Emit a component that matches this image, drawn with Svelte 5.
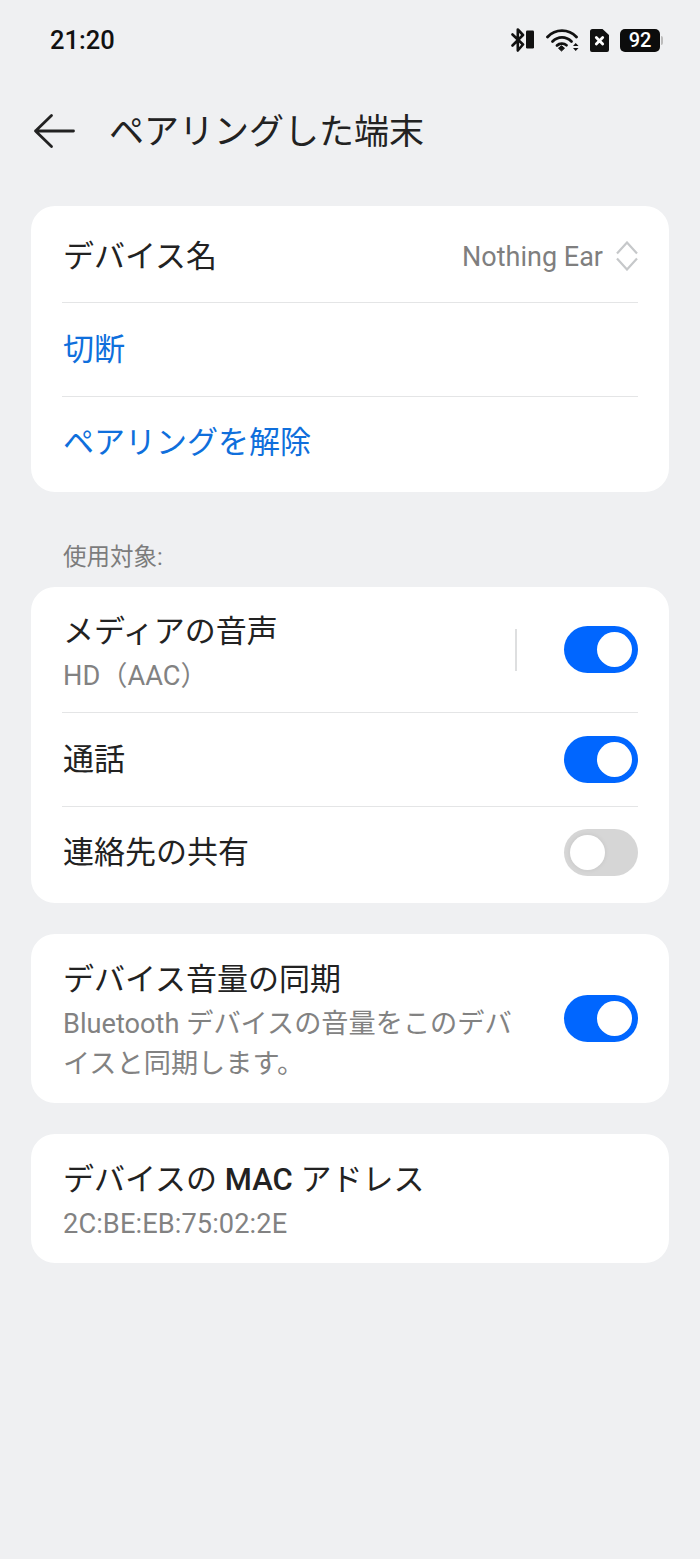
<script>
  const mediaOn = true;
</script>

<div class="page">
  <header class="status">
    <span class="time">21:20</span>
    <div class="status-icons">
      <svg width="24" height="24" viewBox="0 0 24 24">
        <path d="M1.5 6.5 L12 16.5 L6.8 22.5 V1.5 L12 7 L1.5 17.5" fill="none" stroke="#111" stroke-width="2.6" stroke-linejoin="round" stroke-linecap="round"/>
        <rect x="15" y="2.5" width="8" height="18" rx="1.2" fill="#111"/>
      </svg>
      <svg width="33" height="24" viewBox="0 0 33 24">
        <path d="M1.5 9 C9.5 0.5 22.5 0.5 30.5 9" fill="none" stroke="#111" stroke-width="2.8" stroke-linecap="round"/>
        <path d="M6.5 13.5 C12 8 20 8 25.5 13.5" fill="none" stroke="#111" stroke-width="2.8" stroke-linecap="round"/>
        <path d="M11 17.5 C13.5 15 18 15 20.5 17.2" fill="none" stroke="#111" stroke-width="2.8" stroke-linecap="round"/>
        <path d="M12.5 20.2 L15.5 17.8 L18.5 20.2 L15.5 23 Z" fill="#111" stroke="#111" stroke-linejoin="round"/>
        <path d="M27 18 H32.5 L29.7 15 Z M27 20 H32.5 L29.7 23 Z" fill="#111"/>
      </svg>
      <svg width="19" height="23" viewBox="0 0 19 23">
        <path d="M2.5 0 H12.5 L19 6 V21 A2 2 0 0 1 17 23 H2 A2 2 0 0 1 0 21 V2.5 A2.5 2.5 0 0 1 2.5 0 Z" fill="#111"/>
        <path d="M6.3 8.5 L12.7 15 M12.7 8.5 L6.3 15" stroke="#fff" stroke-width="2.8" stroke-linecap="round"/>
      </svg>
      <div class="battery"><span class="level">92</span><span class="nub"></span></div>
    </div>
  </header>

  <div class="titlebar">
    <svg width="44" height="38" viewBox="0 0 44 38">
      <path d="M2.5 19 H40.5 M18.5 3.5 L2.5 19 L18.5 34.5" fill="none" stroke="#222" stroke-width="2.8" stroke-linecap="round" stroke-linejoin="round"/>
    </svg>
    <h1>ペアリングした端末</h1>
  </div>

  <section class="card">
    <div class="row first">
      <span class="main">デバイス名</span>
      <div class="value">
        <span>Nothing Ear</span>
        <svg width="22" height="30" viewBox="0 0 22 30">
          <path d="M1 12.5 L11 1.5 L21 12.5 M1 17.5 L11 28.5 L21 17.5" fill="none" stroke="#c6c8ca" stroke-width="2.2"/>
        </svg>
      </div>
    </div>
    <div class="row link-row"><span class="main link">切断</span></div>
    <div class="row link-row"><span class="main link">ペアリングを解除</span></div>
  </section>

  <p class="label">使用対象:</p>

  <section class="card">
    <div class="row media">
      <div class="texts">
        <span class="main">メディアの音声</span>
        <span class="sub">HD（AAC）</span>
      </div>
      <div class="right">
        <span class="vline"></span>
        <span class="switch" class:on={mediaOn}><i></i></span>
      </div>
    </div>
    <div class="row call">
      <span class="main">通話</span>
      <span class="switch on"><i></i></span>
    </div>
    <div class="row call">
      <span class="main">連絡先の共有</span>
      <span class="switch"><i></i></span>
    </div>
  </section>

  <section class="card spaced">
    <div class="row sync">
      <div class="texts narrow">
        <span class="main">デバイス音量の同期</span>
        <span class="sub">Bluetooth デバイスの音量をこのデバイスと同期します。</span>
      </div>
      <span class="switch on"><i></i></span>
    </div>
  </section>

  <section class="card spaced">
    <div class="row mac">
      <div class="texts">
        <span class="main">デバイスの <b>MAC</b> アドレス</span>
        <span class="sub mac-value">2C:BE:EB:75:02:2E</span>
      </div>
    </div>
  </section>
</div>

<style>
  :global(body) {
    margin: 0;
    background: #eff0f2;
  }
  .page {
    width: 700px;
    height: 1559px;
    box-sizing: border-box;
    background: #eff0f2;
    font-family: Roboto, "Noto Sans CJK JP", sans-serif;
    color: #222;
    overflow: hidden;
  }
  .status {
    height: 80px;
    display: flex;
    align-items: center;
    justify-content: space-between;
    padding: 0 37px 0 50px;
  }
  .time {
    font-size: 25.5px;
    font-weight: 500;
    color: #111;
  }
  .status-icons {
    display: flex;
    align-items: center;
    gap: 11px;
  }
  .battery {
    display: flex;
    align-items: center;
    gap: 1px;
  }
  .level {
    width: 40px;
    height: 23px;
    border-radius: 5px;
    background: #0c0c0c;
    color: #fff;
    font-size: 20px;
    font-weight: 500;
    line-height: 23px;
    text-align: center;
  }
  .nub {
    width: 2px;
    height: 9px;
    background: #bbb;
    border-radius: 0 2px 2px 0;
  }
  .titlebar {
    height: 102px;
    display: flex;
    align-items: center;
    gap: 32px;
    padding: 0 0 0 33px;
    margin-bottom: 24px;
  }
  h1 {
    margin: 0;
    padding-top: 4px;
    font-size: 35px;
    font-weight: 400;
    line-height: 46px;
    color: #222;
  }
  .card {
    margin: 0 31px;
    padding: 0 31px;
    background: #fff;
    border-radius: 24px;
  }
  .spaced {
    margin-top: 31px;
  }
  .row {
    display: flex;
    align-items: center;
    justify-content: space-between;
    box-sizing: border-box;
    border-top: 1px solid #e4e5e6;
    padding-left: 1px;
  }
  .row.first,
  .row.media,
  .row.sync,
  .row.mac {
    border-top: none;
  }
  .first {
    height: 96px;
    padding-top: 3px;
  }
  .first .main,
  .value span {
    padding-top: 3px;
  }
  .link-row {
    height: 94px;
  }
  .link-row:last-child {
    height: 96px;
    padding-bottom: 4px;
  }
  .main {
    font-size: 31px;
    line-height: 40px;
    color: #222;
  }
  .main b {
    font-weight: 500;
  }
  .link {
    color: #0f6fdc;
  }
  .value {
    display: flex;
    align-items: center;
    gap: 13px;
    font-size: 27px;
    color: #7f7f7f;
  }
  .label {
    margin: 0;
    padding: 48px 0 0 63px;
    height: 47px;
    font-size: 23.5px;
    line-height: 34px;
    color: #7c7c7c;
  }
  .texts {
    display: flex;
    flex-direction: column;
    gap: 4px;
  }
  .media .texts {
    padding-top: 9px;
  }
  .sync .texts {
    padding-top: 7px;
  }
  .mac .texts {
    padding-top: 7px;
  }
  .narrow {
    width: 455px;
  }
  .sub {
    font-size: 27.2px;
    line-height: 40px;
    color: #828282;
  }
  .mac-value {
    letter-spacing: 0.1px;
  }
  .media {
    height: 125px;
  }
  .call {
    height: 94px;
  }
  .call:last-child {
    height: 97px;
    padding-bottom: 5px;
  }
  .sync {
    height: 169px;
  }
  .mac {
    height: 129px;
  }
  .right {
    display: flex;
    align-items: center;
    gap: 47px;
  }
  .vline {
    width: 2px;
    height: 42px;
    background: #dedfe0;
  }
  .switch {
    display: block;
    position: relative;
    width: 74px;
    height: 47px;
    border-radius: 24px;
    background: #d6d6d6;
    flex: none;
  }
  .switch.on {
    background: #0066ff;
  }
  .switch i {
    position: absolute;
    top: 6px;
    left: 5.5px;
    width: 35px;
    height: 35px;
    border-radius: 50%;
    background: #fff;
    box-shadow: 0 0 5px rgba(0, 0, 0, 0.08);
  }
  .switch.on i {
    left: 33px;
    box-shadow: none;
  }
</style>
